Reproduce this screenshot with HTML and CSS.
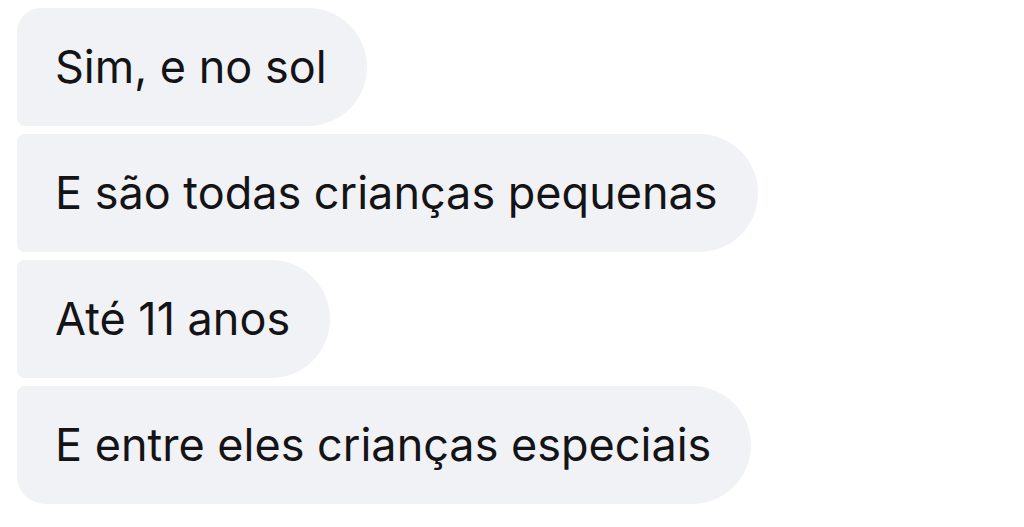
FILE: index.html
```html
<!DOCTYPE html>
<html lang="pt">
<head>
<meta charset="utf-8">
<link rel="stylesheet" href="styles.css">
</head>
<body>
<div class="thread">
  <div class="bubble first">Sim, e no sol</div>
  <div class="bubble">E são todas crianças pequenas</div>
  <div class="bubble">Até 11 anos</div>
  <div class="bubble last">E entre eles crianças especiais</div>
</div>
</body>
</html>
```
FILE: styles.css
```css
html, body {
  margin: 0;
  padding: 0;
  background: #ffffff;
}
.thread {
  display: flex;
  flex-direction: column;
  align-items: flex-start;
  gap: 8px;
  padding: 8px 0 0 17px;
}
.bubble {
  box-sizing: border-box;
  height: 118px;
  display: flex;
  align-items: center;
  padding: 0 40px 2px 38px;
  background: #f1f2f5;
  color: #141417;
  font-family: Inter, "Liberation Sans", sans-serif;
  font-size: 45px;
  letter-spacing: 0;
  border-radius: 8px 59px 59px 8px;
  white-space: nowrap;
}
.bubble.first {
  border-top-left-radius: 24px;
}
.bubble.last {
  border-bottom-left-radius: 28px;
}
```
